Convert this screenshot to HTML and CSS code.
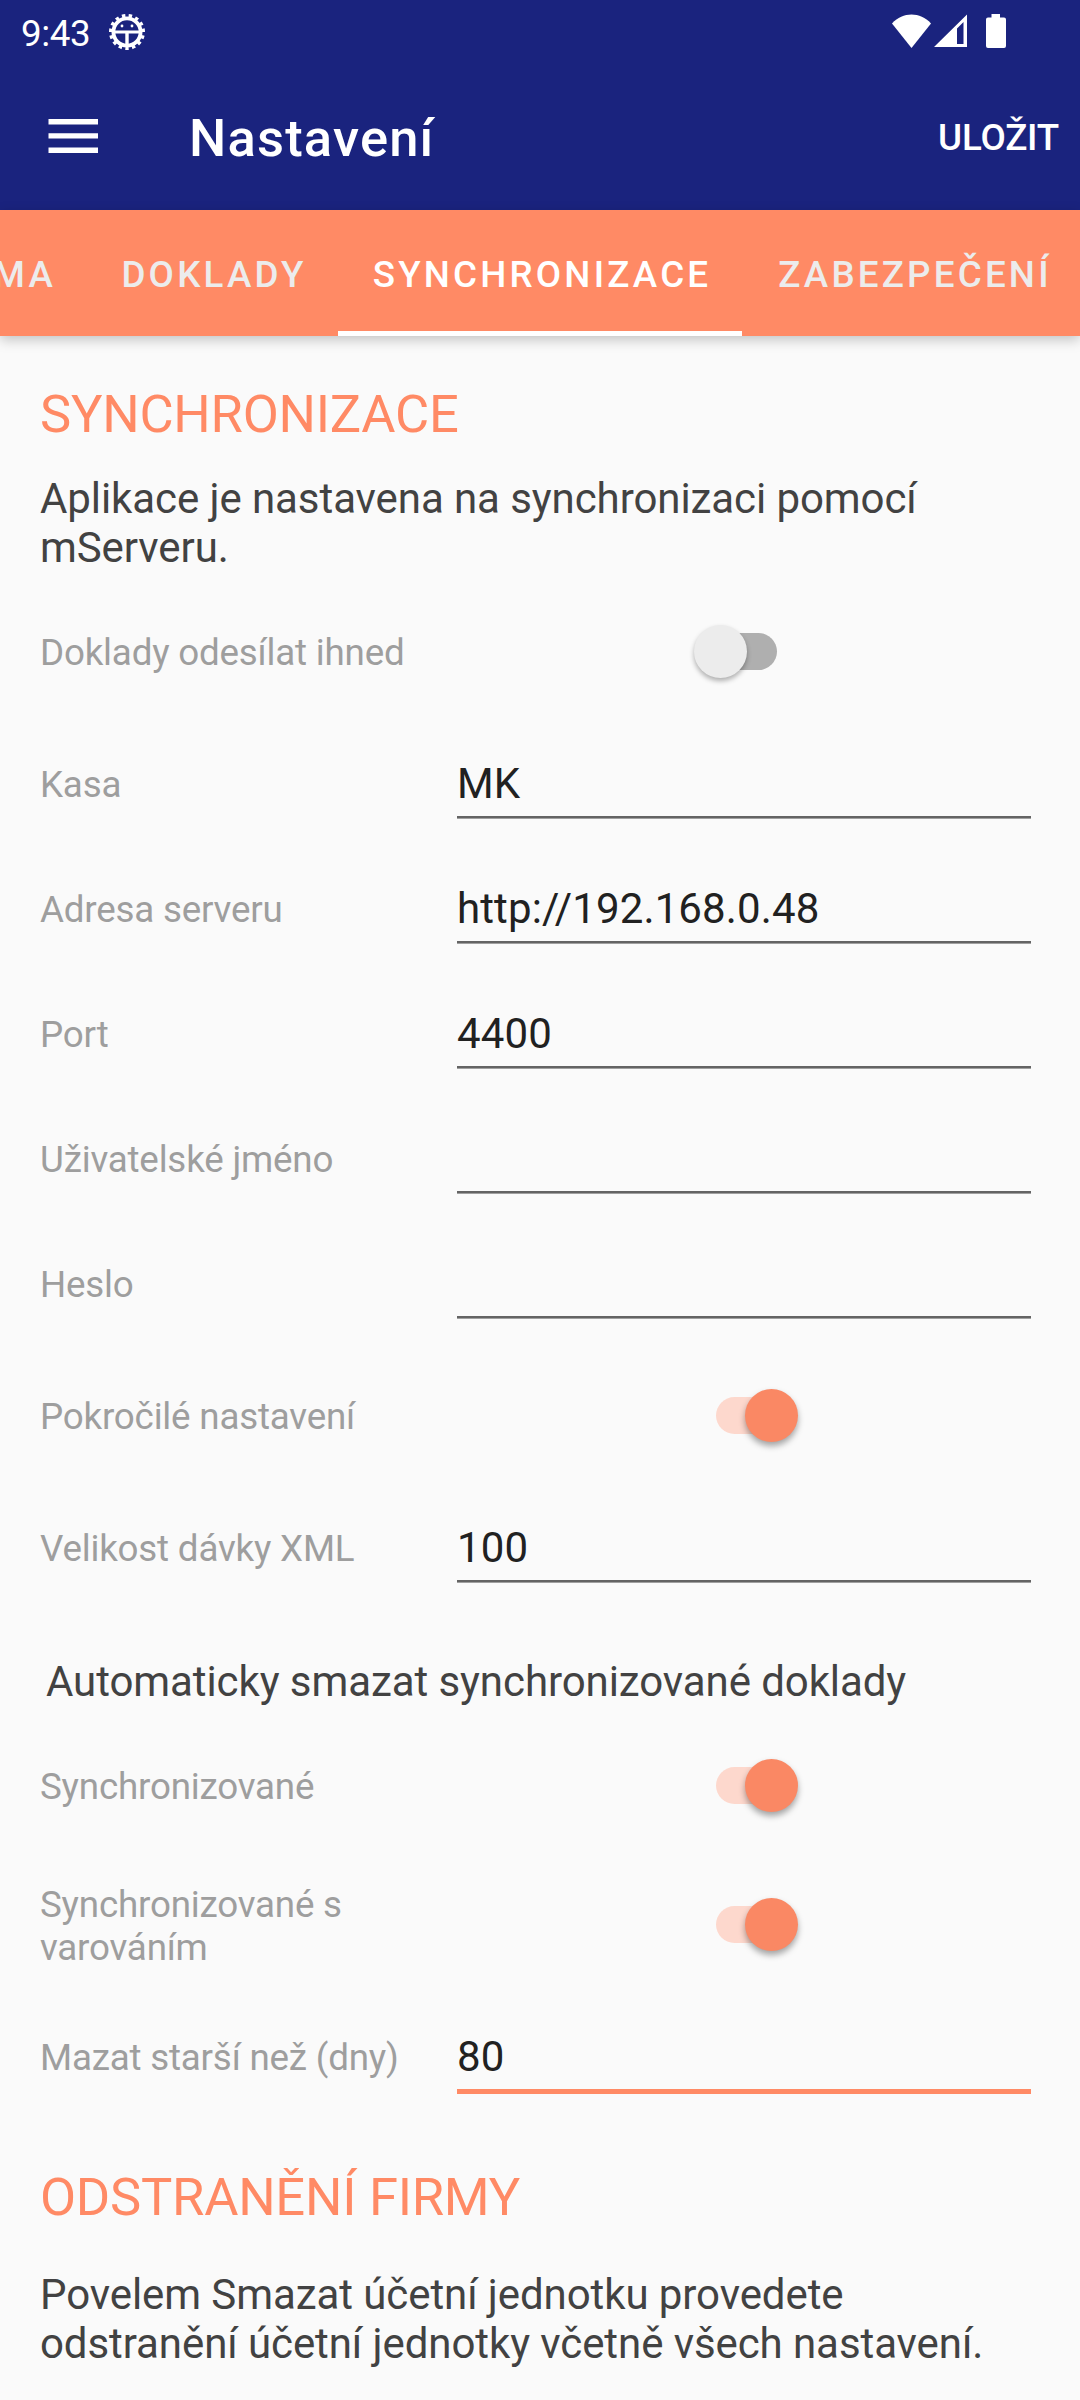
FILE: index.html
```html
<!DOCTYPE html>
<html lang="cs">
<head>
    <meta charset="UTF-8">
    <meta name="viewport" content="width=device-width, initial-scale=1.0">
    <title>Nastavení</title>
    <link rel="stylesheet" href="styles.css">
</head>
<body>
    <div class="statusBar">
        <span class="time">9:43</span>
        <svg class="gear" width="38" height="38" viewBox="0 0 38 38">
            <circle class="teeth" cx="19" cy="19" r="16" pathLength="150"/>
            <circle class="ring" cx="19" cy="19" r="13.6"/>
            <path d="M7 17.400h24v3H7z M17.300 19h3.400v13h-3.400z"/>
            <circle cx="14" cy="13" r="1.400"/>
            <circle cx="24" cy="13" r="1.400"/>
        </svg>
        <svg class="signals" width="116" height="36" viewBox="0 0 116 36">
            <path d="M0 9.5C11 -2.4 28 -2.4 39 9.5L19.500 34z"/>
            <path fill-rule="evenodd" d="M42 33L75 .5V33z M65 14.500V30H71.500V8z"/>
            <path d="M99.500 0h8.500v3.500h4q2 0 2 2v26.500q0 2-2 2h-16q-2 0-2-2v-26.500q0-2 2-2h3.500z"/>
        </svg>
    </div>
    <div class="toolbar">
        <svg class="menu" width="50" height="35" viewBox="0 0 50 35">
            <path d="M.5 0H50v5.500H.5z M.5 14.300H50v5.200H.5z M.5 28.500H50v5.500H.5z"/>
        </svg>
        <h1 class="title">Nastavení</h1>
        <span class="save">ULOŽIT</span>
    </div>
    <div class="tabs">
        <span class="tab tabFirma">FIRMA</span>
        <span class="tab tabDoklady">DOKLADY</span>
        <span class="tab tabSync active">SYNCHRONIZACE</span>
        <span class="tab tabZabezpeceni">ZABEZPEČENÍ</span>
    </div>
    <div class="content">
        <h2 class="heading">SYNCHRONIZACE</h2>
        <p class="text info">Aplikace je nastavena na synchronizaci pomocí<br>mServeru.</p>
        <div class="row rowSwitch">
            <span class="label">Doklady odesílat ihned</span>
            <span class="switch"><span class="thumb"></span><span class="track"></span></span>
        </div>
        <div class="row">
            <span class="label">Kasa</span>
            <div class="field">MK</div>
        </div>
        <div class="row">
            <span class="label">Adresa serveru</span>
            <div class="field">http://192.168.0.48</div>
        </div>
        <div class="row">
            <span class="label">Port</span>
            <div class="field">4400</div>
        </div>
        <div class="row">
            <span class="label">Uživatelské jméno</span>
            <div class="field"></div>
        </div>
        <div class="row">
            <span class="label">Heslo</span>
            <div class="field"></div>
        </div>
        <div class="row rowSwitch">
            <span class="label">Pokročilé nastavení</span>
            <span class="switch on"><span class="track"></span><span class="thumb"></span></span>
        </div>
        <div class="row">
            <span class="label">Velikost dávky XML</span>
            <div class="field">100</div>
        </div>
        <p class="text subtitle">Automaticky smazat synchronizované doklady</p>
        <div class="row rowSwitch">
            <span class="label">Synchronizované</span>
            <span class="switch on"><span class="track"></span><span class="thumb"></span></span>
        </div>
        <div class="row rowSwitch">
            <span class="label">Synchronizované s<br>varováním</span>
            <span class="switch on"><span class="track"></span><span class="thumb"></span></span>
        </div>
        <div class="row">
            <span class="label">Mazat starší než (dny)</span>
            <div class="field focus">80</div>
        </div>
        <h2 class="heading headingRemove">ODSTRANĚNÍ FIRMY</h2>
        <p class="text">Povelem Smazat účetní jednotku provedete<br>odstranění účetní jednotky včetně všech nastavení.</p>
    </div>
</body>
</html>
```
FILE: styles.css
```css
*{
    padding: 0px;
    margin: 0px;
    box-sizing: border-box;
}

body {
    width: 1080px;
    height: 2400px;
    overflow: hidden;
    font-family: Roboto, "Liberation Sans", sans-serif;
    background-color: #fafafa;
}

.statusBar {
    display: flex;
    align-items: flex-start;
    height: 63px;
    padding: 12px 72px 0 21px;
    background-color: #1a237e;
    color: #fff;
}

.statusBar svg,
.toolbar svg {
    fill: #fff;
}

.statusBar .time {
    width: 87px;
    font-size: 36.75px;
    line-height: 43px;
    letter-spacing: -0.4px;
}

.statusBar .gear {
    margin-top: 1px;
}

.statusBar .gear .teeth {
    fill: none;
    stroke: #fff;
    stroke-width: 4;
    stroke-dasharray: 5 5;
    stroke-dashoffset: 5;
}

.statusBar .gear .ring {
    fill: none;
    stroke: #fff;
    stroke-width: 3.8;
}

.statusBar .signals {
    margin: 2px 0 0 auto;
}

.toolbar {
    display: flex;
    align-items: center;
    height: 147px;
    padding: 0 21px 0 48px;
    background-color: #1a237e;
    color: #fff;
}

.toolbar .title {
    margin: 3px 0 0 91px;
    font-size: 52.5px;
    font-weight: 500;
    line-height: 62px;
    letter-spacing: 1.2px;
}

.toolbar .save {
    margin: 2px 0 0 auto;
    font-size: 36.75px;
    font-weight: 500;
    line-height: 43px;
    letter-spacing: -0.2px;
}

.tabs {
    display: flex;
    height: 126px;
    overflow: hidden;
    background-color: #ff8a65;
    box-shadow: 0 4px 12px rgba(0, 0, 0, 0.22);
}

.tabs .tab {
    flex: none;
    display: flex;
    align-items: center;
    justify-content: center;
    height: 126px;
    border-bottom: 5px solid transparent;
    border-top: 7px solid transparent;
    color: #ececec;
    font-size: 36.75px;
    font-weight: 500;
    letter-spacing: 3.2px;
}

.tabs .tabFirma {
    width: 87px;
    padding-right: 31px;
    justify-content: flex-end;
}

.tabs .tabDoklady {
    width: 251px;
    padding-left: 3px;
}

.tabs .tabSync {
    width: 404px;
    padding-left: 4px;
}

.tabs .tabZabezpeceni {
    width: 345px;
    padding-left: 1px;
}

.tabs .active {
    border-bottom-color: #fff;
    color: #fff;
}

.content {
    padding: 47px 49px 0 40px;
}

.heading {
    color: #ff8a65;
    font-size: 52.5px;
    font-weight: 400;
    line-height: 62px;
    letter-spacing: -0.25px;
}

.headingRemove {
    margin: 46px 0 42px;
}

.text {
    color: #424242;
    font-size: 42px;
    line-height: 49px;
    letter-spacing: -0.08px;
    white-space: nowrap;
}

.info {
    margin: 29px 0 11px;
}

.subtitle {
    margin: 46px 0 11px 6px;
}

.row {
    display: flex;
    align-items: center;
    height: 125px;
}

.rowSwitch {
    height: 139px;
}

.label {
    flex: none;
    width: 417px;
    color: #9e9e9e;
    font-size: 36.75px;
    line-height: 43px;
    letter-spacing: -0.2px;
}

.field {
    flex: 1;
    align-self: flex-start;
    height: 96px;
    padding-top: 37px;
    border-bottom: 2px solid #646464;
    box-shadow: 0 1px #a0a0a0;
    color: #212121;
    font-size: 42px;
    line-height: 49px;
    letter-spacing: 0.12px;
}

.focus {
    height: 99px;
    border-bottom: 5px solid #ff8a65;
    box-shadow: none;
}

.switch {
    display: flex;
    align-items: center;
    margin: -3px 0 0 237px;
}

.switch .thumb {
    z-index: 1;
    width: 53px;
    height: 53px;
    border-radius: 50%;
    background-color: #ececec;
    box-shadow: 0 3px 5px rgba(0, 0, 0, 0.3);
}

.switch .track {
    width: 73px;
    height: 37px;
    margin-left: -43px;
    border-radius: 19px;
    background-color: #afafaf;
}

.on {
    margin-left: 259px;
}

.on .track {
    width: 72px;
    margin: 0 -43px 0 0;
    background-color: #fdd8cd;
}

.on .thumb {
    background-color: #fa8864;
    box-shadow: 0 4px 6px rgba(0, 0, 0, 0.35);
}
```
